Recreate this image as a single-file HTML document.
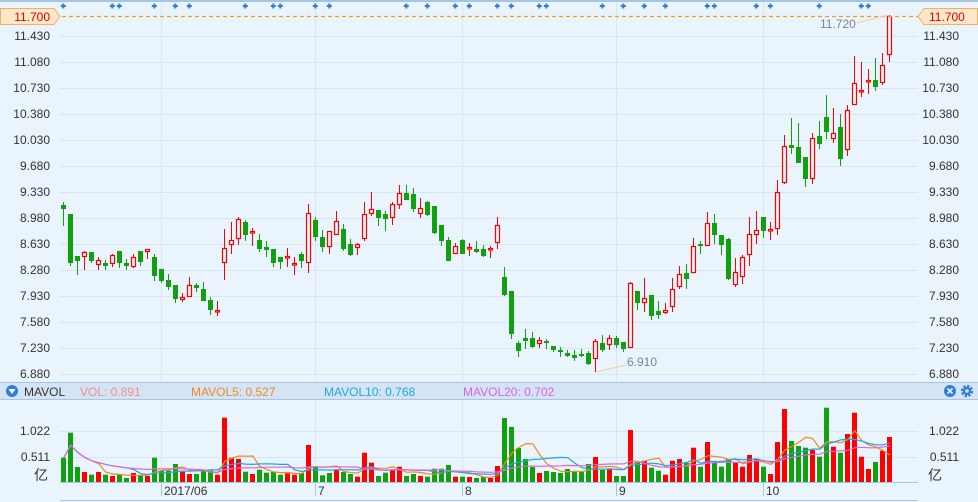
<!DOCTYPE html>
<html><head><meta charset="utf-8">
<style>
html,body{margin:0;padding:0;background:#eaf4fc;}
svg{display:block;}
text{font-family:"Liberation Sans",sans-serif;font-size:12px;}
</style></head>
<body>
<svg id="s" width="978" height="502" xmlns="http://www.w3.org/2000/svg">
<rect x="0" y="0" width="978" height="502" fill="#eaf4fc"/>
<line x1="0" y1="1" x2="978" y2="1" stroke="#a9c4e0" stroke-width="2"/>
<g id="grid" stroke="#d5e6f6" stroke-width="1"></g>
<g id="marks" fill="#2f7fd8"></g>
<g id="candles"></g>
<g id="vols"></g>
<g id="mas" fill="none" stroke-width="1.2"></g>
<!-- price labels -->
<g fill="#333" text-anchor="end">
<text x="50" y="40">11.430</text><text x="50" y="66">11.080</text><text x="50" y="92">10.730</text>
<text x="50" y="118">10.380</text><text x="50" y="144">10.030</text><text x="50" y="170">9.680</text>
<text x="50" y="196">9.330</text><text x="50" y="222">8.980</text><text x="50" y="248">8.630</text>
<text x="50" y="274">8.280</text><text x="50" y="300">7.930</text><text x="50" y="326">7.580</text>
<text x="50" y="352">7.230</text><text x="50" y="378">6.880</text>
<text x="959" y="40">11.430</text><text x="959" y="66">11.080</text><text x="959" y="92">10.730</text>
<text x="959" y="118">10.380</text><text x="959" y="144">10.030</text><text x="959" y="170">9.680</text>
<text x="959" y="196">9.330</text><text x="959" y="222">8.980</text><text x="959" y="248">8.630</text>
<text x="959" y="274">8.280</text><text x="959" y="300">7.930</text><text x="959" y="326">7.580</text>
<text x="959" y="352">7.230</text><text x="959" y="378">6.880</text>
<text x="50" y="435">1.022</text><text x="50" y="461">0.511</text>
<text x="959" y="435">1.022</text><text x="959" y="461">0.511</text>
</g>
<text x="34" y="480" fill="#333" font-size="14" style="font-family:'Liberation Sans','Noto Sans CJK SC',sans-serif;font-size:14px">亿</text>
<text x="928" y="480" fill="#333" style="font-family:'Liberation Sans','Noto Sans CJK SC',sans-serif;font-size:14px">亿</text>
<!-- last price line -->
<line x1="62" y1="16.5" x2="918" y2="16.5" stroke="#f09a28" stroke-width="1.2" stroke-dasharray="4,3"/>
<polygon points="0.5,8.5 54,8.5 60,16.5 54,24.5 0.5,24.5" fill="#fde7c9" stroke="#f4b060"/>
<text x="50" y="21" fill="#e60000" text-anchor="end">11.700</text>
<polygon points="918,16.5 924,8.5 977.5,8.5 977.5,24.5 924,24.5" fill="#fde7c9" stroke="#f4b060"/>
<text x="929" y="21" fill="#e60000">11.700</text>
<line x1="857" y1="23" x2="888" y2="15" stroke="#f5cf9a"/>
<text x="820" y="28" fill="#7a8594">11.720</text>
<line x1="596" y1="372" x2="626" y2="365" stroke="#f5cf9a"/>
<text x="627" y="366" fill="#7a8594">6.910</text>
<!-- MAVOL bar -->
<rect x="0" y="382" width="978" height="18" fill="#d4e4f5"/>
<line x1="0" y1="382.5" x2="978" y2="382.5" stroke="#a8c6e4"/>
<line x1="0" y1="399.5" x2="978" y2="399.5" stroke="#a8c6e4"/>
<circle cx="12" cy="391" r="6" fill="#2f7fd8"/>
<polygon points="8.5,389 15.5,389 12,394" fill="#fff"/>
<text x="24" y="396" fill="#333">MAVOL</text>
<text x="80" y="396" fill="#f28c8c">VOL: 0.891</text>
<text x="191" y="396" fill="#f08a1c">MAVOL5: 0.527</text>
<text x="324" y="396" fill="#1ba8e0">MAVOL10: 0.768</text>
<text x="463" y="396" fill="#e060e0">MAVOL20: 0.702</text>
<circle cx="950" cy="391" r="6" fill="#2f7fd8"/>
<path d="M947.5 388.5 L952.5 393.5 M952.5 388.5 L947.5 393.5" stroke="#fff" stroke-width="1.5"/>
<circle cx="967" cy="391" r="4.6" fill="none" stroke="#2f7fd8" stroke-width="3" stroke-dasharray="2.2,1.4"/>
<circle cx="967" cy="391" r="4" fill="#2f7fd8"/>
<circle cx="967" cy="391" r="1.8" fill="#d4e4f5"/>
<!-- bottom axis -->
<line x1="60" y1="482.5" x2="918" y2="482.5" stroke="#a8c6e4"/>
<line x1="60" y1="500.5" x2="918" y2="500.5" stroke="#a8c6e4"/>
<g stroke="#a8c6e4">
<line x1="161.5" y1="483" x2="161.5" y2="496"/><line x1="315.5" y1="483" x2="315.5" y2="496"/>
<line x1="462.5" y1="483" x2="462.5" y2="496"/><line x1="616.5" y1="483" x2="616.5" y2="496"/>
<line x1="763.5" y1="483" x2="763.5" y2="496"/>
</g>
<g fill="#333">
<text x="164" y="495">2017/06</text><text x="318" y="495">7</text><text x="465" y="495">8</text>
<text x="619" y="495">9</text><text x="766" y="495">10</text>
</g>
</svg>
<script>
var NS="http://www.w3.org/2000/svg";
function el(p,t,a){var e=document.createElementNS(NS,t);for(var k in a)e.setAttribute(k,a[k]);p.appendChild(e);return e;}
var grid=document.getElementById('grid');
[36,62,88,114,140,166,192,218,244,270,296,322,348,374,431,457].forEach(function(y){el(grid,'line',{x1:60,x2:918,y1:y+.5,y2:y+.5});});
[161,315,462,616,763].forEach(function(x){el(grid,'line',{x1:x+.5,x2:x+.5,y1:2,y2:382});el(grid,'line',{x1:x+.5,x2:x+.5,y1:400,y2:482});});
var marks=document.getElementById('marks');
[63,112,119,154,175,189,245,273,280,315,329,406,427,455,469,497,511,539,546,602,623,644,665,707,714,756,770,819,861,868].forEach(function(x){
 el(marks,'rect',{x:x-2.5+.3,y:5,width:5,height:2});el(marks,'rect',{x:x-1+.3,y:3.5,width:2,height:5});});
var C="g205,209,202,226|g214,263,214,266|g256,261,256,275|r252,257,251,270|g252,261,252,263|r260,265,257,270|g263,266,260,270|r255,264,254,267|g251,263,251,268|g263,266,259,270|r257,267,254,268|g251,262,251,266|r249,252,249,259|g257,276,254,281|g269,281,269,283|g280,287,274,290|g285,299,285,303|r297,300,293,302|r285,297,277,297|g285,288,283,292|g289,301,282,301|g300,310,297,315|r310,312,301,316|r248,263,229,280|r240,245,222,254|r219,239,217,245|g222,235,220,241|r231,233,228,246|g240,249,234,252|g247,250,241,257|g249,263,249,267|g257,262,257,269|r256,258,248,267|r263,265,257,275|g254,261,252,268|r213,263,204,273|g220,237,217,241|g237,247,230,252|r231,247,231,254|r221,235,211,235|g229,249,224,251|g244,255,239,256|r244,248,243,255|r214,239,202,241|r209,214,192,216|g210,218,210,226|g214,219,211,231|r204,218,202,225|r193,205,185,209|g193,200,185,200|g194,209,188,212|r208,214,198,218|g202,215,201,216|g206,233,206,234|g225,241,225,246|g240,261,237,261|r246,254,243,254|g240,254,239,254|r247,249,243,256|g249,252,241,253|g249,256,245,257|r248,249,246,258|r225,243,217,249|g277,295,267,296|g291,334,291,339|g343,351,341,357|g338,341,329,349|g338,347,332,348|r340,344,337,348|g341,343,339,349|g346,350,346,352|g350,352,347,357|g353,356,350,357|g355,358,350,361|g354,356,349,357|g353,364,351,365|r341,359,339,372|g343,350,335,352|r338,345,335,350|g338,345,336,348|g342,349,342,352|r283,348,282,348|g291,303,291,310|r298,303,278,312|g295,316,295,320|g311,315,301,319|r310,313,303,314|r289,307,278,312|r274,287,266,289|g273,279,264,289|r246,273,238,273|g244,246,241,254|r223,246,212,246|g223,235,214,244|g235,245,235,255|g239,279,238,280|r272,285,258,287|r257,277,255,284|r234,255,217,266|r230,235,211,244|g217,231,217,238|r229,231,222,240|r192,229,180,235|r146,183,135,184|g145,148,118,154|g147,163,123,163|g157,179,157,187|r138,179,133,184|g136,144,121,149|g117,132,95,139|r133,139,108,143|g127,159,114,166|r110,150,105,156|r83,105,56,105|r90,92,62,97|r80,82,69,94|g80,87,58,91|r65,83,53,85|r16,55,15,62".split('|');
var cg=document.getElementById('candles');
var G="#10a010",R="#ff0000";
C.forEach(function(s,i){
 var c=s[0],v=s.slice(1).split(',').map(Number),x=Math.round(63.3+7*i);
 var col=c=='g'?G:R;
 el(cg,'line',{x1:x+.5,x2:x+.5,y1:v[2],y2:v[3],stroke:col,'stroke-width':1});
 if(c=='g'){el(cg,'rect',{x:x-2,y:v[0],width:5,height:Math.max(2,v[1]-v[0]),fill:G});}
 else{el(cg,'rect',{x:x-1.5,y:v[0]+.5,width:4,height:Math.max(1.5,v[1]-v[0]-1),fill:"#eaf4fc",stroke:R,'stroke-width':1.2});}
});
var V="457.7g,432.7g,467g,472r,474.7g,472r,474.7g,476r,474.7g,478g,473r,475g,476r,457.7g,470.7g,470.7g,464g,471.7r,474r,474g,470g,470.7g,474.7r,417.7r,457.7r,459r,471.7g,474r,469.7g,472.7g,472g,474.7g,473.3r,474.7r,473g,445r,467.3g,475.3g,473g,469.3r,472g,474g,476.7r,452.7r,462.7r,476g,472.7g,470r,466.7r,476g,474g,476r,476.7g,468.7g,468.7g,465g,476.7r,476.7g,477r,478g,477g,478r,466r,418g,427g,448g,459g,467g,473r,471g,472g,473g,469g,472g,472g,464g,457r,470g,469r,476g,476g,430r,462g,460.7r,467.7g,470.7g,474.7r,460.7r,459r,463g,447.7r,466.7g,442r,463g,466.7g,459g,463r,466.7r,455r,459r,466.7g,474r,442r,409r,441g,446g,447.7g,450r,456.7g,407.7g,446.7r,452.7g,434r,412.7r,456.7r,469r,462g,450.7r,437r".split(',');
var vg=document.getElementById('vols'),vals=[];
V.forEach(function(s,i){var c=s.slice(-1),t=parseFloat(s),x=Math.round(63.3+7*i);vals.push(482-t);
 el(vg,'rect',{x:x-2,y:t,width:5,height:482-t,fill:c=='g'?G:R});});
var mg=document.getElementById('mas');
[[5,"#f08a1c"],[10,"#1ba8e0"],[20,"#e066e0"]].forEach(function(p){
 var pts=[];for(var i=0;i<vals.length;i++){var s=0,n=0;for(var j=Math.max(0,i-p[0]+1);j<=i;j++){s+=vals[j];n++;}
 pts.push((63.8+7*i).toFixed(1)+","+(482-s/n).toFixed(1));}
 el(mg,'polyline',{points:pts.join(' '),stroke:p[1]});});
</script>
</body></html>
